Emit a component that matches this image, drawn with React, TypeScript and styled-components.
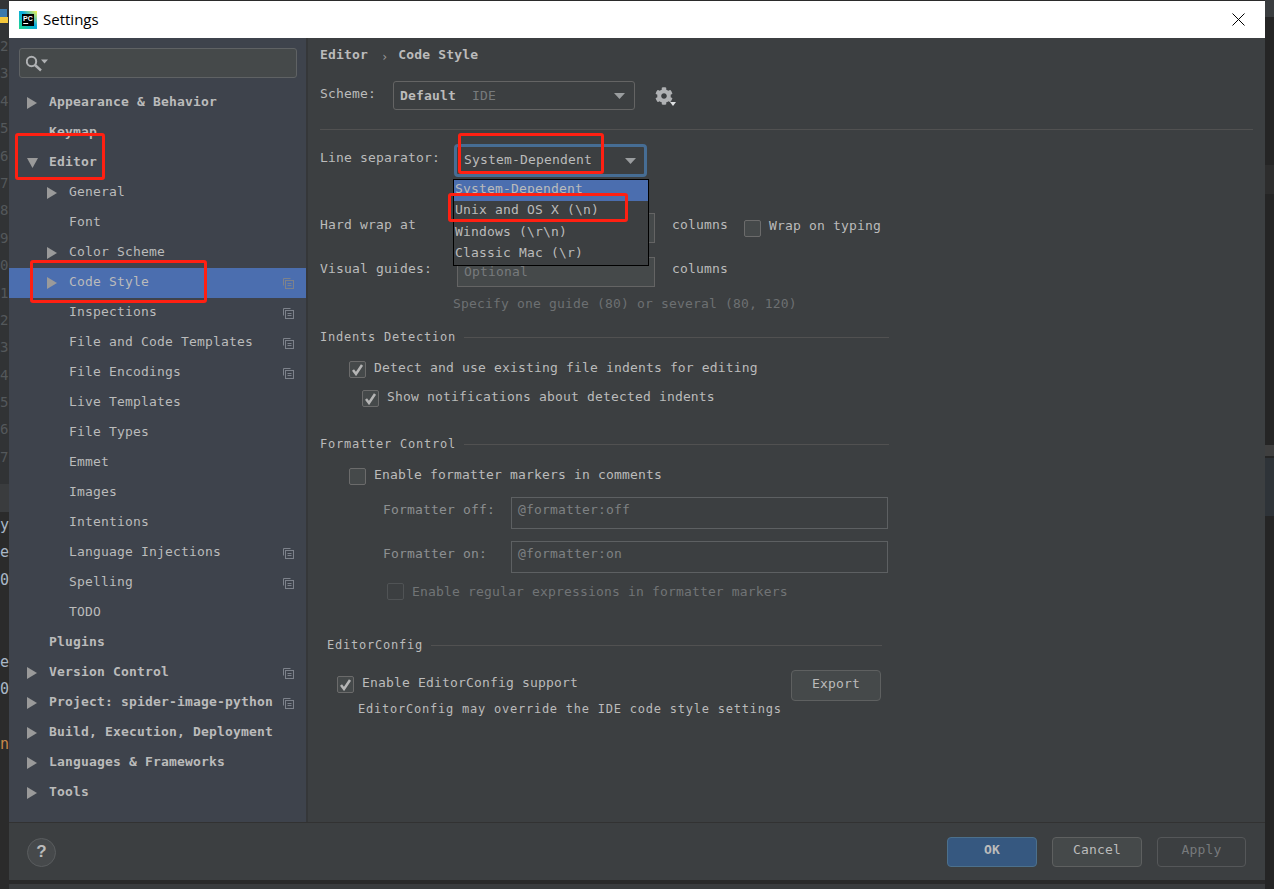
import React from "react";
import styled, { createGlobalStyle } from "styled-components";
import { FaCog } from "react-icons/fa";

const Global = createGlobalStyle`
  html, body { margin: 0; padding: 0; background: #2b2b2b; overflow: hidden; }
  #root { width: 1274px; height: 889px; }
  * { box-sizing: border-box; }
`;

const Page = styled.div`
  position: relative;
  display: flex;
  width: 1274px;
  height: 889px;
  background: #2b2b2b;
  overflow: hidden;
  font-family: "DejaVu Sans Mono", "Liberation Mono", monospace;
  font-size: 13px;
  letter-spacing: 0.17px;
  color: #bbbbbb;
`;

const LeftStrip = styled.div`
  width: 9px;
  flex: none;
  display: flex;
  flex-direction: column;
  overflow: hidden;
  background: #2b2b2b;
`;
const PyMark = styled.div`
  height: 30px;
  flex: none;
  background: #333537;
`;
const Gutter = styled.div`
  height: 454px;
  flex: none;
  padding-top: 3px;
  background: #313335;
  color: #54585b;
  font-size: 14px;
`;
const GutterNum = styled.div`
  height: 27.4px;
  line-height: 27px;
  white-space: nowrap;
`;
const Band = styled.div`
  height: 28px;
  flex: none;
  background: #3a3c3e;
`;
const CodeLine = styled.div<{ $c?: string }>`
  height: 27.4px;
  flex: none;
  line-height: 27px;
  font-size: 15px;
  letter-spacing: 0;
  color: ${(p) => p.$c || "#a9b7c6"};
  white-space: nowrap;
`;

const Middle = styled.div`
  width: 1256px;
  flex: none;
  display: flex;
  flex-direction: column;
`;
const TopEdge = styled.div`
  height: 1px;
  flex: none;
  background: #2b2b2b;
`;
const Win = styled.div`
  height: 879px;
  flex: none;
  display: flex;
  flex-direction: column;
  background: #3c3f41;
`;
const BottomShade = styled.div`
  height: 4px;
  flex: none;
  background: #2a2a2a;
`;
const BottomRest = styled.div`
  flex: 1;
  background: #3a3c3e;
`;

const TitleBar = styled.div`
  height: 37px;
  flex: none;
  background: #ffffff;
  display: flex;
  align-items: center;
  padding: 0 20px 0 10px;
  color: #000;
  font-family: "Open Sans", "Noto Sans", sans-serif;
  font-size: 15px;
  letter-spacing: 0;
`;
const TitleText = styled.span`
  margin-left: 6px;
  padding-bottom: 2px;
  flex: 1;
`;

const Body = styled.div`
  height: 784px;
  flex: none;
  display: flex;
`;
const Sidebar = styled.div`
  width: 297px;
  flex: none;
  background: #3e434c;
  display: flex;
  flex-direction: column;
  padding-top: 10px;
`;
const SplitLine = styled.div`
  width: 2px;
  flex: none;
  background: #353739;
`;
const Search = styled.div`
  height: 30px;
  margin: 0 9px 0 10px;
  flex: none;
  display: flex;
  align-items: center;
  padding-left: 6px;
  background: #45494a;
  border: 1px solid #5f6264;
  border-radius: 3px;
`;
const Tree = styled.div`
  margin-top: 10px;
  display: flex;
  flex-direction: column;
`;
const Row = styled.div<{ $level: number; $selected?: boolean; $bold?: boolean }>`
  height: 30px;
  flex: none;
  display: flex;
  align-items: center;
  padding: 0 12px 0 ${(p) => 18 + p.$level * 20}px;
  background: ${(p) => (p.$selected ? "#4b6eaf" : "transparent")};
  font-weight: ${(p) => (p.$bold ? 700 : 400)};
`;
const ArrowSlot = styled.span`
  width: 22px;
  height: 12px;
  flex: none;
  display: flex;
  align-items: center;
`;
const RowLabel = styled.span`
  padding-bottom: 4px;
  flex: 1;
  white-space: nowrap;
`;

const Content = styled.div`
  flex: 1;
  display: flex;
  flex-direction: column;
  padding: 0 12px;
`;
const Breadcrumb = styled.div`
  height: 33px;
  flex: none;
  display: flex;
  align-items: center;
  font-weight: 700;
`;
const Crumb = styled.span`
  margin: 4px 10px 0 13px;
  font-weight: 400;
  font-size: 12px;
  color: #999;
  letter-spacing: 0;
`;
const SchemeRow = styled.div`
  margin-top: 10px;
  height: 29px;
  flex: none;
  display: flex;
  align-items: center;
`;
const FieldLabel = styled.span<{ $w: number; $dim?: boolean; $up?: number }>`
  width: ${(p) => p.$w}px;
  flex: none;
  padding-bottom: ${(p) => p.$up ?? 5}px;
  color: ${(p) => (p.$dim ? "#8c8f91" : "#bbbbbb")};
  white-space: nowrap;
`;
const Combo = styled.div`
  width: 242px;
  height: 29px;
  flex: none;
  display: flex;
  align-items: center;
  padding: 0 9px 0 6px;
  border: 1px solid #646464;
  border-radius: 3px;
`;
const ComboBold = styled.span`
  font-weight: 700;
  margin-right: 16px;
`;
const ComboDim = styled.span`
  flex: 1;
  color: #777a7c;
`;
const GearWrap = styled.div`
  margin-left: 20px;
  display: flex;
  align-items: flex-end;
  color: #afb1b3;
`;
const GearCaret = styled.svg`
  margin: 0 0 -1px -3px;
`;
const Rule = styled.div`
  margin-top: 19px;
  height: 1px;
  flex: none;
  background: #515151;
`;
const LineSepRow = styled.div`
  margin-top: 14px;
  height: 33px;
  flex: none;
  display: flex;
  align-items: center;
`;
const FocusCombo = styled.div`
  width: 193px;
  height: 33px;
  flex: none;
  display: flex;
  align-items: center;
  padding: 0 8px 0 7px;
  border: 3px solid #466d94;
  border-radius: 4px;
`;
const ComboValue = styled.span`
  flex: 1;
  padding-bottom: 2px;
`;
const InputRow = styled.div<{ $top: number }>`
  margin-top: ${(p) => p.$top}px;
  height: 30px;
  flex: none;
  display: flex;
  align-items: center;
`;
const InputBox = styled.div`
  width: 198px;
  height: 30px;
  flex: none;
  display: flex;
  align-items: center;
  padding: 0 0 2px 6px;
  background: #45494a;
  border: 1px solid #646464;
  color: #777a7c;
`;
const Columns = styled.span`
  margin-left: 17px;
  padding-bottom: 7px;
`;
const WrapCheck = styled.div`
  margin-left: 16px;
  display: flex;
  align-items: center;
`;
const Hint = styled.div`
  margin: 9px 0 0 133px;
  height: 16px;
  line-height: 16px;
  flex: none;
  color: #6d7072;
`;
const SectionTitle = styled.div<{ $top: number; $left?: number; $width: number }>`
  margin: ${(p) => p.$top}px 0 0 ${(p) => p.$left ?? 0}px;
  width: ${(p) => p.$width}px;
  height: 16px;
  flex: none;
  display: flex;
  align-items: center;
  font-size: 12px;
  letter-spacing: 0.77px;
  &::after {
    content: "";
    flex: 1;
    height: 1px;
    margin-left: 8px;
    background: #515151;
  }
`;
const CheckRow = styled.div<{ $top: number; $left: number; $off?: boolean }>`
  margin: ${(p) => p.$top}px 0 0 ${(p) => p.$left}px;
  height: 17px;
  flex: none;
  display: flex;
  align-items: center;
  color: ${(p) => (p.$off ? "#717476" : "#bbbbbb")};
  white-space: nowrap;
`;
const Box = styled.span<{ $off?: boolean }>`
  width: 17px;
  height: 17px;
  flex: none;
  margin-right: 8px;
  display: flex;
  align-items: center;
  justify-content: center;
  background: ${(p) => (p.$off ? "#3c3f41" : "#45494a")};
  border: 1px solid ${(p) => (p.$off ? "#505355" : "#6b6b6b")};
  border-radius: 2px;
`;
const CheckText = styled.span<{ $up?: number }>`
  padding-bottom: ${(p) => p.$up ?? 4}px;
`;
const FormatterRow = styled.div<{ $top: number }>`
  margin: ${(p) => p.$top}px 0 0 63px;
  height: 32px;
  flex: none;
  display: flex;
  align-items: center;
`;
const FormatterBox = styled.div`
  width: 377px;
  height: 32px;
  flex: none;
  padding: 0 0 7px 6px;
  display: flex;
  align-items: center;
  border: 1px solid #5d6062;
  color: #7e8183;
`;
const ConfigRow = styled.div`
  margin: 17px 0 0 17px;
  width: 544px;
  height: 31px;
  flex: none;
  display: flex;
  align-items: flex-start;
  justify-content: space-between;
`;
const Note = styled.div`
  margin: 0 0 0 38px;
  height: 16px;
  line-height: 16px;
  flex: none;
  font-size: 12px;
  letter-spacing: 0.77px;
`;
const Footer = styled.div`
  height: 58px;
  flex: none;
  display: flex;
  align-items: center;
  padding: 0 19px 0 18px;
  border-top: 1px solid #323232;
`;
const Help = styled.div`
  width: 29px;
  height: 29px;
  flex: none;
  display: flex;
  align-items: center;
  justify-content: center;
  border-radius: 50%;
  background: #46494b;
  border: 1px solid #5a5d5f;
  font-family: "Liberation Sans", sans-serif;
  font-size: 17px;
  font-weight: 700;
  letter-spacing: 0;
  margin-top: 1px;
  color: #bbbbbb;
`;
const FooterSpace = styled.div`
  flex: 1;
`;
const Btn = styled.div<{ $kind?: "primary" | "disabled"; $w?: number; $h?: number; $ml?: number; $mt?: number }>`
  width: ${(p) => p.$w ?? 90}px;
  height: ${(p) => p.$h ?? 30}px;
  flex: none;
  display: flex;
  align-items: center;
  justify-content: center;
  padding-bottom: 5px;
  margin-left: ${(p) => p.$ml ?? 0}px;
  margin-top: ${(p) => p.$mt ?? 0}px;
  border-radius: 4px;
  border: 1px solid ${(p) => (p.$kind === "primary" ? "#4c708c" : p.$kind === "disabled" ? "#555759" : "#5e6060")};
  background: ${(p) => (p.$kind === "primary" ? "#365880" : p.$kind === "disabled" ? "transparent" : "#45494a")};
  font-weight: ${(p) => (p.$kind === "primary" ? 700 : 400)};
  color: ${(p) => (p.$kind === "disabled" ? "#777a7c" : "#bbbbbb")};
`;

const RightStrip = styled.div`
  width: 9px;
  flex: none;
  display: flex;
  flex-direction: column;
  background: #252525;
`;
const RightSeg = styled.div<{ $h: number; $c: string }>`
  height: ${(p) => p.$h}px;
  flex: none;
  background: ${(p) => p.$c};
`;

const Popup = styled.div`
  position: absolute;
  left: 453px;
  top: 179px;
  width: 196px;
  height: 87px;
  background: #3c3f41;
  border: 1px solid #000;
  display: flex;
  flex-direction: column;
`;
const PopupItem = styled.div<{ $selected?: boolean }>`
  height: 21.25px;
  flex: none;
  padding: 0 0 4px 1px;
  display: flex;
  align-items: center;
  background: ${(p) => (p.$selected ? "#4b6eaf" : "transparent")};
  white-space: nowrap;
`;
const Mark = styled.div<{ $x: number; $y: number; $w: number; $h: number }>`
  position: absolute;
  left: ${(p) => p.$x}px;
  top: ${(p) => p.$y}px;
  width: ${(p) => p.$w}px;
  height: ${(p) => p.$h}px;
  border: 3px solid #ff2012;
  border-radius: 3px;
`;

const Logo = () => (
  <svg width="18" height="18" viewBox="0 0 18 18">
    <defs>
      <linearGradient id="pcg" x1="0" y1="1" x2="1" y2="0">
        <stop offset="0" stopColor="#21d789" />
        <stop offset="0.55" stopColor="#09aae0" />
        <stop offset="1" stopColor="#fcf84a" />
      </linearGradient>
    </defs>
    <rect width="18" height="18" fill="url(#pcg)" />
    <rect x="3" y="3" width="12" height="12" fill="#000" />
    <text x="4" y="9.6" fontFamily="Liberation Sans, sans-serif" fontSize="7" fontWeight="700" fill="#fff">PC</text>
    <rect x="4.2" y="12" width="5" height="1" fill="#fff" />
  </svg>
);
const CloseIcon = () => (
  <svg width="13" height="13" viewBox="0 0 13 13">
    <path d="M0.5 0.5L12.5 12.5M12.5 0.5L0.5 12.5" stroke="#000" strokeWidth="1" fill="none" />
  </svg>
);
const SearchIcon = () => (
  <svg width="23" height="17" viewBox="0 0 23 17">
    <circle cx="5.5" cy="6.5" r="4.7" fill="none" stroke="#afb1b3" strokeWidth="2" />
    <path d="M9 10L15 15.5" stroke="#afb1b3" strokeWidth="2.4" />
    <path d="M15 4.5H22L18.5 8.5Z" fill="#afb1b3" />
  </svg>
);
const ArrowRight = () => (
  <svg width="10" height="12" viewBox="0 0 10 12">
    <path d="M0 0L10 6L0 12Z" fill="#9a9a9a" />
  </svg>
);
const ArrowDown = () => (
  <svg width="11" height="10" viewBox="0 0 11 10">
    <path d="M0 0L11 0L5.5 10Z" fill="#9a9a9a" />
  </svg>
);
const CopyIcon = () => (
  <svg width="11" height="11" viewBox="0 0 11 11">
    <path d="M7.5 0.5H0.5V7.5" fill="none" stroke="#7d828b" />
    <rect x="2.5" y="2.5" width="8" height="8" fill="none" stroke="#7d828b" />
    <path d="M4.5 5.5H8.5M4.5 7.5H8.5" stroke="#7d828b" />
  </svg>
);
const Caret = () => (
  <svg width="11" height="6" viewBox="0 0 11 6">
    <path d="M0 0H11L5.5 6Z" fill="#9a9d9f" />
  </svg>
);
const Tick = () => (
  <svg width="13" height="13" viewBox="0 0 13 13">
    <path d="M2 7L5 11L11 2" fill="none" stroke="#b5b5b5" strokeWidth="2.5" />
  </svg>
);

type Item = { label: string; level: number; arrow?: "r" | "d"; bold?: boolean; copy?: boolean; selected?: boolean };
const items: Item[] = [
  { label: "Appearance & Behavior", level: 0, arrow: "r", bold: true },
  { label: "Keymap", level: 0, bold: true },
  { label: "Editor", level: 0, arrow: "d", bold: true },
  { label: "General", level: 1, arrow: "r" },
  { label: "Font", level: 1 },
  { label: "Color Scheme", level: 1, arrow: "r" },
  { label: "Code Style", level: 1, arrow: "r", copy: true, selected: true },
  { label: "Inspections", level: 1, copy: true },
  { label: "File and Code Templates", level: 1, copy: true },
  { label: "File Encodings", level: 1, copy: true },
  { label: "Live Templates", level: 1 },
  { label: "File Types", level: 1 },
  { label: "Emmet", level: 1 },
  { label: "Images", level: 1 },
  { label: "Intentions", level: 1 },
  { label: "Language Injections", level: 1, copy: true },
  { label: "Spelling", level: 1, copy: true },
  { label: "TODO", level: 1 },
  { label: "Plugins", level: 0, bold: true },
  { label: "Version Control", level: 0, arrow: "r", bold: true, copy: true },
  { label: "Project: spider-image-python", level: 0, arrow: "r", bold: true, copy: true },
  { label: "Build, Execution, Deployment", level: 0, arrow: "r", bold: true },
  { label: "Languages & Frameworks", level: 0, arrow: "r", bold: true },
  { label: "Tools", level: 0, arrow: "r", bold: true },
];

const gutter = ["2", "3", "4", "5", "6", "7", "8", "9", "0", "1", "2", "3", "4", "5", "6", "7"];
const codeLines: { t: string; c?: string }[] = [
  { t: "y" }, { t: "e" }, { t: "0" }, { t: "" }, { t: "" }, { t: "e" }, { t: "0" }, { t: "" },
  { t: "n", c: "#c8884a" },
];
const rightSegs = [
  { h: 17, c: "#3a3d3f" }, { h: 148, c: "#252525" }, { h: 29, c: "#2d2d2d" }, { h: 251, c: "#252525" },
  { h: 11, c: "#3f3f3f" }, { h: 2, c: "#252525" }, { h: 58, c: "#2e3338" }, { h: 373, c: "#252525" },
];

export default function App() {
  return (
    <Page>
      <Global />
      <LeftStrip>
        <PyMark>
          <svg width="9" height="30" viewBox="0 0 9 30">
            <rect x="0" y="9" width="7" height="8" fill="#3c79ab" />
            <rect x="0" y="17" width="8" height="6" fill="#f5c83b" />
          </svg>
        </PyMark>
        <Gutter>
          {gutter.map((d, i) => (
            <GutterNum key={i}>{d}</GutterNum>
          ))}
        </Gutter>
        <Band />
        {codeLines.map((l, i) => (
          <CodeLine key={i} $c={l.c}>{l.t}</CodeLine>
        ))}
      </LeftStrip>
      <Middle>
        <TopEdge />
        <Win>
          <TitleBar>
            <Logo />
            <TitleText>Settings</TitleText>
            <CloseIcon />
          </TitleBar>
          <Body>
            <Sidebar>
              <Search>
                <SearchIcon />
              </Search>
              <Tree>
                {items.map((it) => (
                  <Row key={it.label} $level={it.level} $selected={it.selected} $bold={it.bold}>
                    <ArrowSlot>
                      {it.arrow === "r" && <ArrowRight />}
                      {it.arrow === "d" && <ArrowDown />}
                    </ArrowSlot>
                    <RowLabel>{it.label}</RowLabel>
                    {it.copy && <CopyIcon />}
                  </Row>
                ))}
              </Tree>
            </Sidebar>
            <SplitLine />
            <Content>
              <Breadcrumb>
                Editor<Crumb>›</Crumb>Code Style
              </Breadcrumb>
              <SchemeRow>
                <FieldLabel $w={73}>Scheme:</FieldLabel>
                <Combo>
                  <ComboBold>Default</ComboBold>
                  <ComboDim>IDE</ComboDim>
                  <Caret />
                </Combo>
                <GearWrap>
                  <FaCog size={18} />
                  <GearCaret width="6" height="4" viewBox="0 0 6 4">
                    <path d="M0 0H6L3 4Z" fill="#dfe1e3" />
                  </GearCaret>
                </GearWrap>
              </SchemeRow>
              <Rule />
              <LineSepRow>
                <FieldLabel $w={134} $up={7}>Line separator:</FieldLabel>
                <FocusCombo>
                  <ComboValue>System-Dependent</ComboValue>
                  <Caret />
                </FocusCombo>
              </LineSepRow>
              <InputRow $top={36}>
                <FieldLabel $w={137} $up={8}>Hard wrap at</FieldLabel>
                <InputBox />
                <Columns>columns</Columns>
                <WrapCheck>
                  <Box />
                  <CheckText $up={6}>Wrap on typing</CheckText>
                </WrapCheck>
              </InputRow>
              <InputRow $top={14}>
                <FieldLabel $w={137} $up={8}>Visual guides:</FieldLabel>
                <InputBox>Optional</InputBox>
                <Columns>columns</Columns>
              </InputRow>
              <Hint>Specify one guide (80) or several (80, 120)</Hint>
              <SectionTitle $top={17} $width={569}>Indents Detection</SectionTitle>
              <CheckRow $top={16} $left={29}>
                <Box><Tick /></Box>
                <CheckText>Detect and use existing file indents for editing</CheckText>
              </CheckRow>
              <CheckRow $top={12} $left={42}>
                <Box><Tick /></Box>
                <CheckText>Show notifications about detected indents</CheckText>
              </CheckRow>
              <SectionTitle $top={29} $width={569}>Formatter Control</SectionTitle>
              <CheckRow $top={16} $left={29}>
                <Box />
                <CheckText>Enable formatter markers in comments</CheckText>
              </CheckRow>
              <FormatterRow $top={12}>
                <FieldLabel $w={128} $dim $up={7}>Formatter off:</FieldLabel>
                <FormatterBox>@formatter:off</FormatterBox>
              </FormatterRow>
              <FormatterRow $top={12}>
                <FieldLabel $w={128} $dim $up={7}>Formatter on:</FieldLabel>
                <FormatterBox>@formatter:on</FormatterBox>
              </FormatterRow>
              <CheckRow $top={10} $left={67} $off>
                <Box $off />
                <CheckText $up={0}>Enable regular expressions in formatter markers</CheckText>
              </CheckRow>
              <SectionTitle $top={37} $left={7} $width={555}>EditorConfig</SectionTitle>
              <ConfigRow>
                <CheckRow $top={6} $left={0}>
                  <Box><Tick /></Box>
                  <CheckText>Enable EditorConfig support</CheckText>
                </CheckRow>
                <Btn $w={90} $h={31}>Export</Btn>
              </ConfigRow>
              <Note>EditorConfig may override the IDE code style settings</Note>
            </Content>
          </Body>
          <Footer>
            <Help>?</Help>
            <FooterSpace />
            <Btn $kind="primary" $mt={1}>OK</Btn>
            <Btn $ml={15} $mt={1}>Cancel</Btn>
            <Btn $kind="disabled" $ml={15} $mt={1} $w={89}>Apply</Btn>
          </Footer>
        </Win>
        <BottomShade />
        <BottomRest />
      </Middle>
      <RightStrip>
        {rightSegs.map((s, i) => (
          <RightSeg key={i} $h={s.h} $c={s.c} />
        ))}
      </RightStrip>
      <Popup>
        <PopupItem $selected>System-Dependent</PopupItem>
        <PopupItem>Unix and OS X (\n)</PopupItem>
        <PopupItem>Windows (\r\n)</PopupItem>
        <PopupItem>Classic Mac (\r)</PopupItem>
      </Popup>
      <Mark $x={15} $y={133} $w={90} $h={47} />
      <Mark $x={30} $y={260} $w={177} $h={43} />
      <Mark $x={458} $y={133} $w={146} $h={41} />
      <Mark $x={448} $y={193} $w={180} $h={29} />
    </Page>
  );
}
